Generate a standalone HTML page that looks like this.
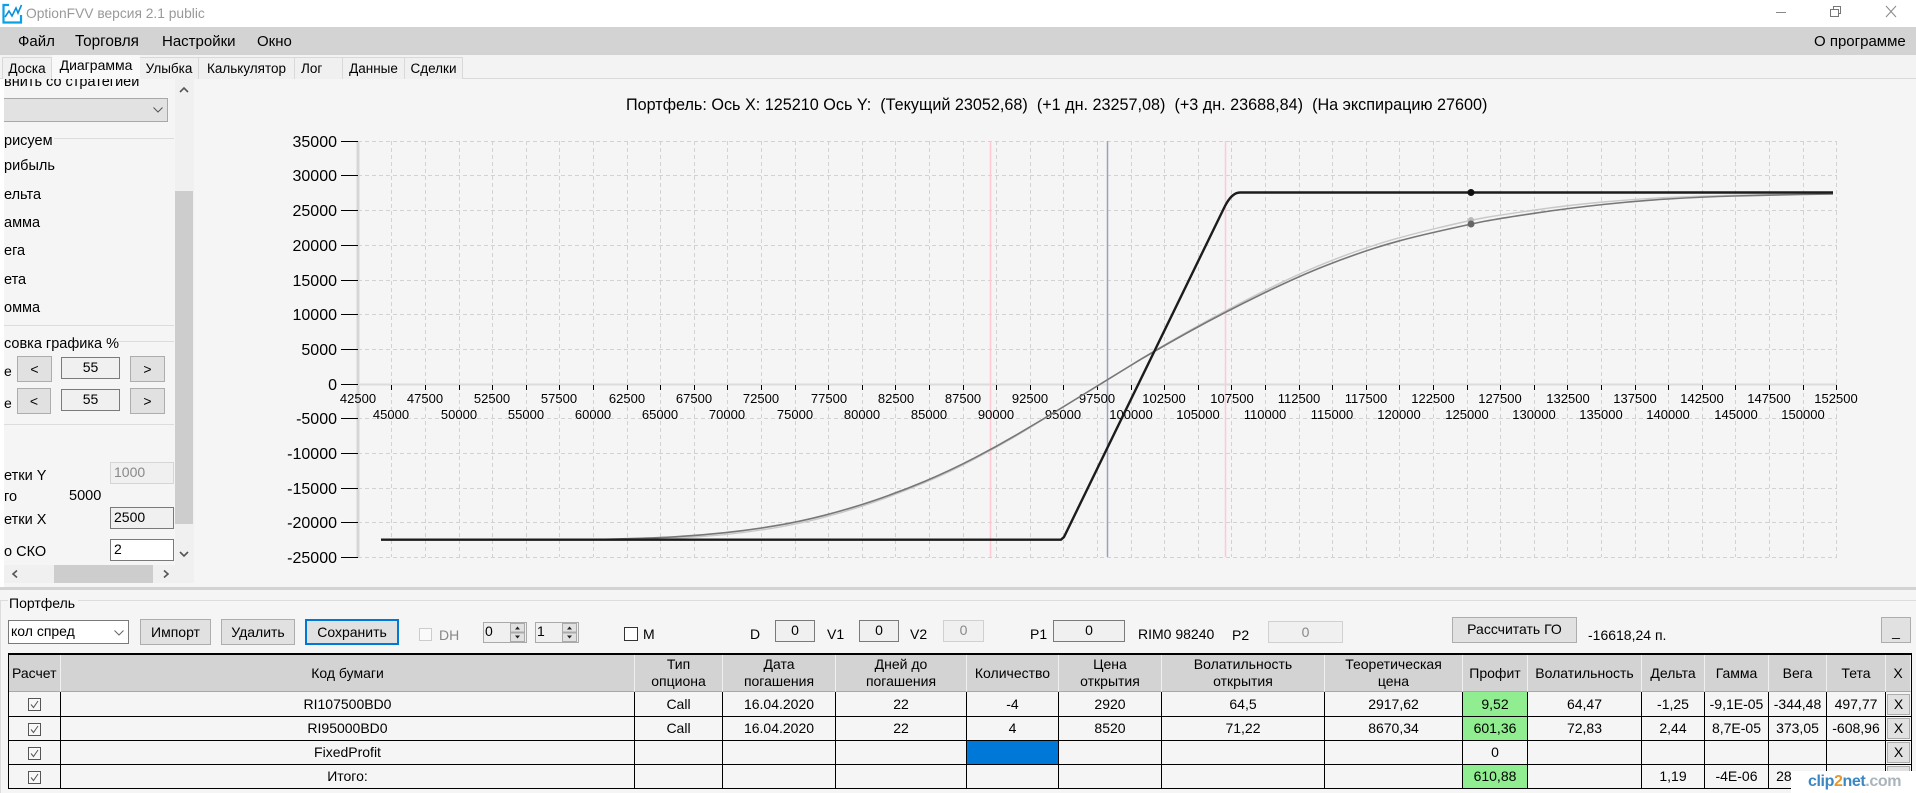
<!DOCTYPE html>
<html><head><meta charset="utf-8"><title>OptionFVV</title>
<style>
html,body{margin:0;padding:0;background:#f5f5f5}
#r{position:relative;width:1916px;height:793px;overflow:hidden;background:#f5f5f5;font-family:"Liberation Sans","DejaVu Sans",sans-serif;font-size:14px;color:#000}
.a{position:absolute;box-sizing:border-box}
.t{position:absolute;white-space:nowrap;line-height:18px;height:18px}
.b{position:absolute;box-sizing:border-box;background:#e1e1e1;border:1px solid #adadad;text-align:center;white-space:nowrap}
.i{position:absolute;box-sizing:border-box;background:#f0f0f0;border:1px solid #7a7a7a;text-align:center;white-space:nowrap}
.tab{position:absolute;box-sizing:border-box;top:57px;height:22px;background:#f0f0f0;border:1px solid #d9d9d9;border-bottom:none;font-size:14px;line-height:21px;text-align:center;white-space:nowrap}
table{position:absolute;left:9px;top:655px;width:1902px;border-collapse:separate;border-spacing:0;table-layout:fixed;font-size:14px}
td,th{box-sizing:border-box;padding:0;text-align:center;font-weight:normal;white-space:nowrap;overflow:hidden;border-right:1px solid #000;border-bottom:1px solid #000;line-height:17px}
th{background:#d3d3d3;border-right:1px solid #f0f0f0;border-bottom:1px solid #a8a8a8;height:37px}
.g{background:#90ee90}
.x{padding:0;position:relative}
.x span{display:block;margin:1px;height:21px;background:#e1e1e1;border:1px solid #adadad;line-height:19px;box-sizing:border-box}
.c{display:inline-block;width:13px;height:13px;vertical-align:middle}
</style></head><body><div id="r">

<!-- title bar -->
<div class="a" style="left:0;top:0;width:1916px;height:27px;background:#fff"></div>
<svg class="a" style="left:1px;top:3px" width="24" height="21" viewBox="0 0 24 21"><path d="M8 2H2.500V19.500H20V12" fill="none" stroke="#0aa0e6" stroke-width="2.200"/><path d="M4 14L8 8L11 13L15 5L17 10L20.500 2" fill="none" stroke="#0a8fd8" stroke-width="1.600"/></svg>
<div class="t" style="left:26px;top:5px;font-size:13.800px;color:#999">OptionFVV версия 2.1 public</div>
<svg class="a" style="left:1770px;top:4px" width="130" height="18"><path d="M6 8.500H16" stroke="#888" fill="none"/><path d="M60.500 5.500V12.500H68.500V5.500ZM63.500 5.500V2.500H70.500V9.500H68.500" stroke="#777" fill="none"/><path d="M116 2L126 13M126 2L116 13" stroke="#888" fill="none"/></svg>

<!-- menu -->
<div class="a" style="left:0;top:27px;width:1916px;height:28px;background:#d3d3d3"></div>
<div class="t" style="left:18px;top:33px;font-size:15px">Файл</div>
<div class="t" style="left:75px;top:33px;font-size:15.300px">Торговля</div>
<div class="t" style="left:162px;top:33px;font-size:15px">Настройки</div>
<div class="t" style="left:257px;top:33px;font-size:15px">Окно</div>
<div class="t" style="left:1814px;top:33px;font-size:15px">О программе</div>

<!-- tabs -->
<div class="a" style="left:0;top:55px;width:1916px;height:24px;background:#f3f3f3;border-bottom:1px solid #d9d9d9"></div>
<div class="tab" style="left:2px;width:50px;font-size:13.500px">Доска</div>
<div class="tab" style="left:139px;width:60px;font-size:13.500px">Улыбка</div>
<div class="tab" style="left:198px;width:97px;font-size:13.500px">Калькулятор</div>
<div class="tab" style="left:294px;width:49px;font-size:13.500px;text-align:left;padding-left:6px">Лог</div>
<div class="tab" style="left:342px;width:63px;font-size:13.500px">Данные</div>
<div class="tab" style="left:404px;width:59px;font-size:13.500px">Сделки</div>
<div class="tab" style="left:52px;top:55px;width:88px;height:24px;background:#f9f9f9;border:none;line-height:21px;font-size:14px">Диаграмма</div>

<!-- left panel -->
<div class="a" style="left:0;top:79px;width:4px;height:510px;background:#fff"></div>
<div class="a" style="left:4px;top:79px;width:171px;height:486px;background:#f5f5f5;overflow:hidden">
  <div class="t" style="left:0;top:-6px;font-size:14.500px">внить со стратегией</div>
</div>
<div class="a" style="left:4px;top:98px;width:164px;height:24px;background:#e2e2e2;border:1px solid #a8a8a8;border-left:none"></div>
<svg class="a" style="left:152px;top:105px" width="12" height="10"><path d="M1.500 2.500L6 7L10.500 2.500" fill="none" stroke="#555"/></svg>
<div class="a" style="left:175px;top:79px;width:19px;height:486px;background:#f0f0f0"></div>
<div class="a" style="left:175px;top:191px;width:18px;height:333px;background:#cdcdcd"></div>
<svg class="a" style="left:178px;top:86px" width="12" height="9"><path d="M2 6L6 2L10 6" fill="none" stroke="#555" stroke-width="1.600"/></svg>
<svg class="a" style="left:178px;top:549px" width="12" height="9"><path d="M2 3L6 7L10 3" fill="none" stroke="#555" stroke-width="1.600"/></svg>
<div class="a" style="left:4px;top:565px;width:190px;height:18px;background:#f0f0f0"></div>
<div class="a" style="left:54px;top:565px;width:99px;height:18px;background:#cdcdcd"></div>
<svg class="a" style="left:8px;top:569px" width="170" height="10"><path d="M9 1.500L5 5L9 8.500" fill="none" stroke="#555" stroke-width="1.600"/><path d="M156 1.500L160 5L156 8.500" fill="none" stroke="#555" stroke-width="1.600"/></svg>
<div class="a" style="left:0;top:587px;width:1916px;height:3px;background:#d3d3d3"></div>

<div class="t" style="left:4px;top:132px;font-size:14.500px">рисуем</div>
<div class="a" style="left:54px;top:138px;width:120px;height:1px;background:#dcdcdc"></div>
<div class="t" style="left:4px;top:157px;font-size:14.500px">рибыль</div>
<div class="t" style="left:4px;top:186px;font-size:14.500px">ельта</div>
<div class="t" style="left:4px;top:214px;font-size:14.500px">амма</div>
<div class="t" style="left:4px;top:242px;font-size:14.500px">ега</div>
<div class="t" style="left:4px;top:271px;font-size:14.500px">ета</div>
<div class="t" style="left:4px;top:299px;font-size:14.500px">омма</div>
<div class="a" style="left:4px;top:325px;width:170px;height:1px;background:#dcdcdc"></div>

<div class="t" style="left:4px;top:335px;font-size:14.500px">совка графика %</div>
<div class="a" style="left:118px;top:341px;width:56px;height:1px;background:#dcdcdc"></div>
<div class="t" style="left:4px;top:362px">е</div>
<div class="b" style="left:17px;top:356px;width:35px;height:26px;line-height:24px">&lt;</div>
<div class="i" style="left:61px;top:357px;width:59px;height:22px;line-height:18px">55</div>
<div class="b" style="left:130px;top:356px;width:35px;height:26px;line-height:24px">&gt;</div>
<div class="t" style="left:4px;top:394px">е</div>
<div class="b" style="left:17px;top:388px;width:34px;height:26px;line-height:24px">&lt;</div>
<div class="i" style="left:61px;top:389px;width:59px;height:22px;line-height:18px">55</div>
<div class="b" style="left:130px;top:388px;width:35px;height:26px;line-height:24px">&gt;</div>
<div class="a" style="left:4px;top:424px;width:170px;height:1px;background:#dcdcdc"></div>

<div class="t" style="left:4px;top:467px;font-size:14.500px">етки Y</div>
<div class="i" style="left:110px;top:462px;width:64px;height:22px;border-color:#d5d5d5;color:#888;text-align:left;padding-left:3px;line-height:19px">1000</div>
<div class="t" style="left:4px;top:488px;font-size:14.500px">го</div>
<div class="t" style="left:69px;top:487px;font-size:14.500px">5000</div>
<div class="t" style="left:4px;top:511px;font-size:14.500px">етки X</div>
<div class="i" style="left:110px;top:507px;width:64px;height:22px;text-align:left;padding-left:3px;line-height:19px">2500</div>
<div class="t" style="left:4px;top:543px;font-size:14.500px">о СКО</div>
<div class="i" style="left:110px;top:539px;width:64px;height:22px;background:#fff;text-align:left;padding-left:3px;line-height:19px">2</div>

<!-- chart -->
<div class="a" style="left:194px;top:79px;width:1722px;height:508px;background:#f5f5f5"></div>
<div class="t" style="left:626px;top:96px;font-size:16.200px;white-space:pre">Портфель: Ось X: 125210 Ось Y:  (Текущий 23052,68)  (+1 дн. 23257,08)  (+3 дн. 23688,84)  (На экспирацию 27600)</div>

<svg class="a" style="left:0;top:0" width="1916" height="590" font-family="Liberation Sans, sans-serif">
<path d="M391.500 141V557M425.500 141V557M459.500 141V557M492.500 141V557M526.500 141V557M559.500 141V557M593.500 141V557M627.500 141V557M660.500 141V557M694.500 141V557M727.500 141V557M761.500 141V557M795.500 141V557M828.500 141V557M862.500 141V557M895.500 141V557M929.500 141V557M963.500 141V557M996.500 141V557M1030.500 141V557M1063.500 141V557M1097.500 141V557M1131.500 141V557M1164.500 141V557M1198.500 141V557M1231.500 141V557M1265.500 141V557M1299.500 141V557M1332.500 141V557M1366.500 141V557M1399.500 141V557M1433.500 141V557M1467.500 141V557M1500.500 141V557M1534.500 141V557M1567.500 141V557M1601.500 141V557M1635.500 141V557M1668.500 141V557M1702.500 141V557M1735.500 141V557M1769.500 141V557M1803.500 141V557M1836.500 141V557" stroke="#d2d2d2" stroke-dasharray="4 3" fill="none"/>
<path d="M358 141.500H1837M358 175.500H1837M358 210.500H1837M358 245.500H1837M358 280.500H1837M358 314.500H1837M358 349.500H1837M358 418.500H1837M358 453.500H1837M358 488.500H1837M358 522.500H1837M358 557.500H1837" stroke="#d2d2d2" stroke-dasharray="4 3" fill="none"/>
<path d="M358 141V557" stroke="#d6d6d6" stroke-width="3" fill="none"/>
<path d="M358 384.500H1837" stroke="#dcdcdc" stroke-width="2" fill="none"/>
<path d="M990.500 141V557M1225.500 141V557" stroke="#ffc9d2" stroke-width="1.500" fill="none"/>
<path d="M1107.500 141V557" stroke="#9aa3b5" stroke-width="1.500" fill="none"/>
<path d="M341 141.500H358M341 175.500H358M341 210.500H358M341 245.500H358M341 280.500H358M341 314.500H358M341 349.500H358M341 384.500H358M341 418.500H358M341 453.500H358M341 488.500H358M341 522.500H358M341 557.500H358" stroke="#000" fill="none"/>
<path d="M391.500 385V390M425.500 385V390M459.500 385V390M492.500 385V390M526.500 385V390M559.500 385V390M593.500 385V390M627.500 385V390M660.500 385V390M694.500 385V390M727.500 385V390M761.500 385V390M795.500 385V390M828.500 385V390M862.500 385V390M895.500 385V390M929.500 385V390M963.500 385V390M996.500 385V390M1030.500 385V390M1063.500 385V390M1097.500 385V390M1131.500 385V390M1164.500 385V390M1198.500 385V390M1231.500 385V390M1265.500 385V390M1299.500 385V390M1332.500 385V390M1366.500 385V390M1399.500 385V390M1433.500 385V390M1467.500 385V390M1500.500 385V390M1534.500 385V390M1567.500 385V390M1601.500 385V390M1635.500 385V390M1668.500 385V390M1702.500 385V390M1735.500 385V390M1769.500 385V390M1803.500 385V390M1836.500 385V390" stroke="#000" fill="none"/>

<g font-size="16" text-anchor="end" fill="#000">
<text x="337" y="147">35000</text><text x="337" y="181">30000</text><text x="337" y="216">25000</text><text x="337" y="251">20000</text><text x="337" y="286">15000</text><text x="337" y="320">10000</text><text x="337" y="355">5000</text><text x="337" y="390">0</text><text x="337" y="424">-5000</text><text x="337" y="459">-10000</text><text x="337" y="494">-15000</text><text x="337" y="528">-20000</text><text x="337" y="563">-25000</text>
</g>
<g font-size="13" text-anchor="middle" fill="#000">
<text x="358" y="403">42500</text><text x="425" y="403">47500</text><text x="492" y="403">52500</text><text x="559" y="403">57500</text><text x="627" y="403">62500</text><text x="694" y="403">67500</text><text x="761" y="403">72500</text><text x="829" y="403">77500</text><text x="896" y="403">82500</text><text x="963" y="403">87500</text><text x="1030" y="403">92500</text><text x="1097" y="403">97500</text><text x="1164" y="403">102500</text><text x="1232" y="403">107500</text><text x="1299" y="403">112500</text><text x="1366" y="403">117500</text><text x="1433" y="403">122500</text><text x="1500" y="403">127500</text><text x="1568" y="403">132500</text><text x="1635" y="403">137500</text><text x="1702" y="403">142500</text><text x="1769" y="403">147500</text><text x="1836" y="403">152500</text>
<text x="391" y="419">45000</text><text x="459" y="419">50000</text><text x="526" y="419">55000</text><text x="593" y="419">60000</text><text x="660" y="419">65000</text><text x="727" y="419">70000</text><text x="795" y="419">75000</text><text x="862" y="419">80000</text><text x="929" y="419">85000</text><text x="996" y="419">90000</text><text x="1063" y="419">95000</text><text x="1131" y="419">100000</text><text x="1198" y="419">105000</text><text x="1265" y="419">110000</text><text x="1332" y="419">115000</text><text x="1399" y="419">120000</text><text x="1467" y="419">125000</text><text x="1534" y="419">130000</text><text x="1601" y="419">135000</text><text x="1668" y="419">140000</text><text x="1736" y="419">145000</text><text x="1803" y="419">150000</text>
</g>

<!-- light curve -->
<path d="M600 539.900Q650 539.500 675 538.300Q700 537 725 534.600Q750 532 775 527.800Q800 523.700 825 517.100Q850 510.500 875 501.800Q900 493 925 482.500Q950 472 975 458.700Q1000 445.700 1025 430.600Q1050 415.500 1078.500 397.700Q1107 380 1131.500 364.800Q1156 349.500 1190.500 330Q1225 310.500 1261 292.500Q1297 274.500 1323.500 263.800Q1350 253 1375 245Q1400 237 1435.500 228.500Q1471 220 1485.500 217.500Q1500 215 1535 210Q1570 205 1603 202Q1636 199 1668 197.500Q1700 196 1735 195.200Q1770 194.500 1801.500 194.200L1833 194" fill="none" stroke="#c8c8c8" stroke-width="1.400"/>
<!-- main curve -->
<path d="M381 539.700L600 539.400Q650 538.300 675 536.800Q700 535.300 725 532.650Q750 530 775 525.850Q800 521.700 825 515.200Q850 508.700 875 500.200Q900 491.700 925 481.200Q950 470.700 975 457.700Q1000 444.700 1025 429.850Q1050 415 1078.500 397.500Q1107 380 1131.500 365Q1156 350 1190.500 331Q1225 312 1261 294.500Q1297 277 1323.500 266.500Q1350 256 1375 248Q1400 240 1435.500 232Q1471 224 1485.500 221.150Q1500 218.300 1535 213.150Q1570 208 1603 204.500Q1636 201 1668 199Q1700 197 1735 196Q1770 195 1801.500 194.500L1833 194" fill="none" stroke="#777" stroke-width="1.600"/>
<path d="M381 539.700H1061L1064 537L1225 206Q1232 192.500 1240 192.500H1833" fill="none" stroke="#1c1c1c" stroke-width="2.400"/>
<circle cx="1471" cy="192.500" r="3.500" fill="#111"/>
<circle cx="1471" cy="220" r="3" fill="#bbb"/>
<circle cx="1471" cy="224" r="3.500" fill="#666"/>
</svg>

<!-- portfolio -->
<div class="a" style="left:0;top:590px;width:1916px;height:203px;background:#f5f5f5"></div>
<div class="a" style="left:0;top:600px;width:1916px;height:1px;background:#dcdcdc"></div>
<div class="a" style="left:0;top:600px;width:1px;height:193px;background:#dcdcdc"></div>
<div class="t" style="left:8px;top:594px;width:70px;background:#f5f5f5;text-indent:1px">Портфель</div>

<div class="a" style="left:8px;top:620px;width:121px;height:24px;background:#fff;border:1px solid #7a7a7a"></div>
<div class="t" style="left:11px;top:622px">кол спред</div>
<svg class="a" style="left:113px;top:628px" width="12" height="10"><path d="M1.500 2.500L6 7L10.500 2.500" fill="none" stroke="#666"/></svg>
<div class="b" style="left:140px;top:619px;width:71px;height:26px;line-height:24px">Импорт</div>
<div class="b" style="left:221px;top:619px;width:74px;height:26px;line-height:24px">Удалить</div>
<div class="b" style="left:305px;top:619px;width:94px;height:26px;line-height:22px;border:2px solid #0078d7">Сохранить</div>
<div class="a" style="left:419px;top:628px;width:13px;height:13px;background:#fafafa;border:1px solid #ccc"></div>
<div class="t" style="left:439px;top:626px;color:#888">DH</div>

<div class="a" style="left:483px;top:622px;width:44px;height:21px;background:#f0f0f0;border:1px solid #aaa"></div>
<div class="t" style="left:485px;top:622px">0</div>
<div class="a" style="left:535px;top:622px;width:44px;height:21px;background:#f0f0f0;border:1px solid #aaa"></div>
<div class="t" style="left:537px;top:622px">1</div>
<svg class="a" style="left:510px;top:623px" width="70" height="20"><g fill="#e1e1e1" stroke="#aaa"><rect x="0.500" y="0.500" width="14" height="8.500"/><rect x="0.500" y="10" width="14" height="8.500"/><rect x="52.500" y="0.500" width="14" height="8.500"/><rect x="52.500" y="10" width="14" height="8.500"/></g><path d="M5 6.500H10L7.500 3.500ZM5 12.500H10L7.500 15.500ZM57 6.500H62L59.500 3.500ZM57 12.500H62L59.500 15.500Z" fill="#222"/></svg>

<div class="a" style="left:624px;top:627px;width:14px;height:14px;background:#fff;border:1px solid #333"></div>
<div class="t" style="left:643px;top:625px">M</div>
<div class="t" style="left:750px;top:625px">D</div>
<div class="i" style="left:775px;top:620px;width:40px;height:22px;line-height:18px">0</div>
<div class="t" style="left:827px;top:625px">V1</div>
<div class="i" style="left:859px;top:620px;width:40px;height:22px;line-height:18px">0</div>
<div class="t" style="left:910px;top:625px">V2</div>
<div class="i" style="left:943px;top:620px;width:41px;height:22px;line-height:18px;border-color:#d0d0d0;color:#888">0</div>
<div class="t" style="left:1030px;top:625px">P1</div>
<div class="i" style="left:1053px;top:620px;width:72px;height:22px;line-height:18px">0</div>
<div class="t" style="left:1138px;top:625px">RIM0 98240</div>
<div class="t" style="left:1232px;top:626px">P2</div>
<div class="i" style="left:1268px;top:621px;width:75px;height:22px;line-height:20px;border-color:#d0d0d0;color:#888">0</div>
<div class="b" style="left:1452px;top:617px;width:125px;height:26px;line-height:22px">Рассчитать ГО</div>
<div class="t" style="left:1588px;top:626px">-16618,24 п.</div>
<div class="b" style="left:1881px;top:617px;width:30px;height:26px;line-height:27px">_</div>

<!-- table -->
<div class="a" style="left:8px;top:653px;width:1904px;height:2px;background:#000"></div>
<div class="a" style="left:8px;top:653px;width:1px;height:136px;background:#000"></div>
<div class="a" style="left:1911px;top:653px;width:1px;height:136px;background:#000"></div>
<table>
<colgroup><col style="width:52px"><col style="width:574px"><col style="width:88px"><col style="width:113px"><col style="width:131px"><col style="width:92px"><col style="width:103px"><col style="width:163px"><col style="width:138px"><col style="width:65px"><col style="width:114px"><col style="width:63px"><col style="width:64px"><col style="width:58px"><col style="width:59px"><col style="width:25px"></colgroup>
<tr><th style="text-align:left;text-indent:3px">Расчет</th><th>Код бумаги</th><th>Тип<br>опциона</th><th>Дата<br>погашения</th><th>Дней до<br>погашения</th><th>Количество</th><th>Цена<br>открытия</th><th>Волатильность<br>открытия</th><th>Теоретическая<br>цена</th><th>Профит</th><th>Волатильность</th><th>Дельта</th><th>Гамма</th><th>Вега</th><th>Тета</th><th>X</th></tr>
<tr style="height:25px"><td><svg class="c" viewBox="0 0 13 13"><rect x=".5" y=".5" width="12" height="12" fill="#f8f8f8" stroke="#555"/><path d="M3 6.500L5.500 9.500L10 3" fill="none" stroke="#555"/></svg></td><td>RI107500BD0</td><td>Call</td><td>16.04.2020</td><td>22</td><td>-4</td><td>2920</td><td>64,5</td><td>2917,62</td><td class="g">9,52</td><td>64,47</td><td>-1,25</td><td>-9,1E-05</td><td>-344,48</td><td>497,77</td><td class="x" style="border-right:none"><span>X</span></td></tr>
<tr style="height:24px"><td><svg class="c" viewBox="0 0 13 13"><rect x=".5" y=".5" width="12" height="12" fill="#f8f8f8" stroke="#555"/><path d="M3 6.500L5.500 9.500L10 3" fill="none" stroke="#555"/></svg></td><td>RI95000BD0</td><td>Call</td><td>16.04.2020</td><td>22</td><td>4</td><td>8520</td><td>71,22</td><td>8670,34</td><td class="g">601,36</td><td>72,83</td><td>2,44</td><td>8,7E-05</td><td>373,05</td><td>-608,96</td><td class="x" style="border-right:none"><span>X</span></td></tr>
<tr style="height:24px"><td><svg class="c" viewBox="0 0 13 13"><rect x=".5" y=".5" width="12" height="12" fill="#f8f8f8" stroke="#555"/><path d="M3 6.500L5.500 9.500L10 3" fill="none" stroke="#555"/></svg></td><td>FixedProfit</td><td></td><td></td><td></td><td style="background:#0078d7"></td><td></td><td></td><td></td><td>0</td><td></td><td></td><td></td><td></td><td></td><td class="x" style="border-right:none"><span>X</span></td></tr>
<tr style="height:24px"><td><svg class="c" viewBox="0 0 13 13"><rect x=".5" y=".5" width="12" height="12" fill="#f8f8f8" stroke="#555"/><path d="M3 6.500L5.500 9.500L10 3" fill="none" stroke="#555"/></svg></td><td>Итого:</td><td></td><td></td><td></td><td></td><td></td><td></td><td></td><td class="g">610,88</td><td></td><td>1,19</td><td>-4E-06</td><td>289,57</td><td></td><td class="x" style="border-right:none"><span>X</span></td></tr>
</table>

<!-- watermark -->
<div class="a" style="left:1791px;top:771px;width:125px;height:22px;background:#fff"></div>
<div class="t" style="left:1808px;top:773px;font-size:16px;font-weight:bold;letter-spacing:-.4px;color:#3b87c4">clip<span style="color:#e8952c">2</span>net<span style="color:#a9b4bd">.com</span></div>
</div></body></html>
